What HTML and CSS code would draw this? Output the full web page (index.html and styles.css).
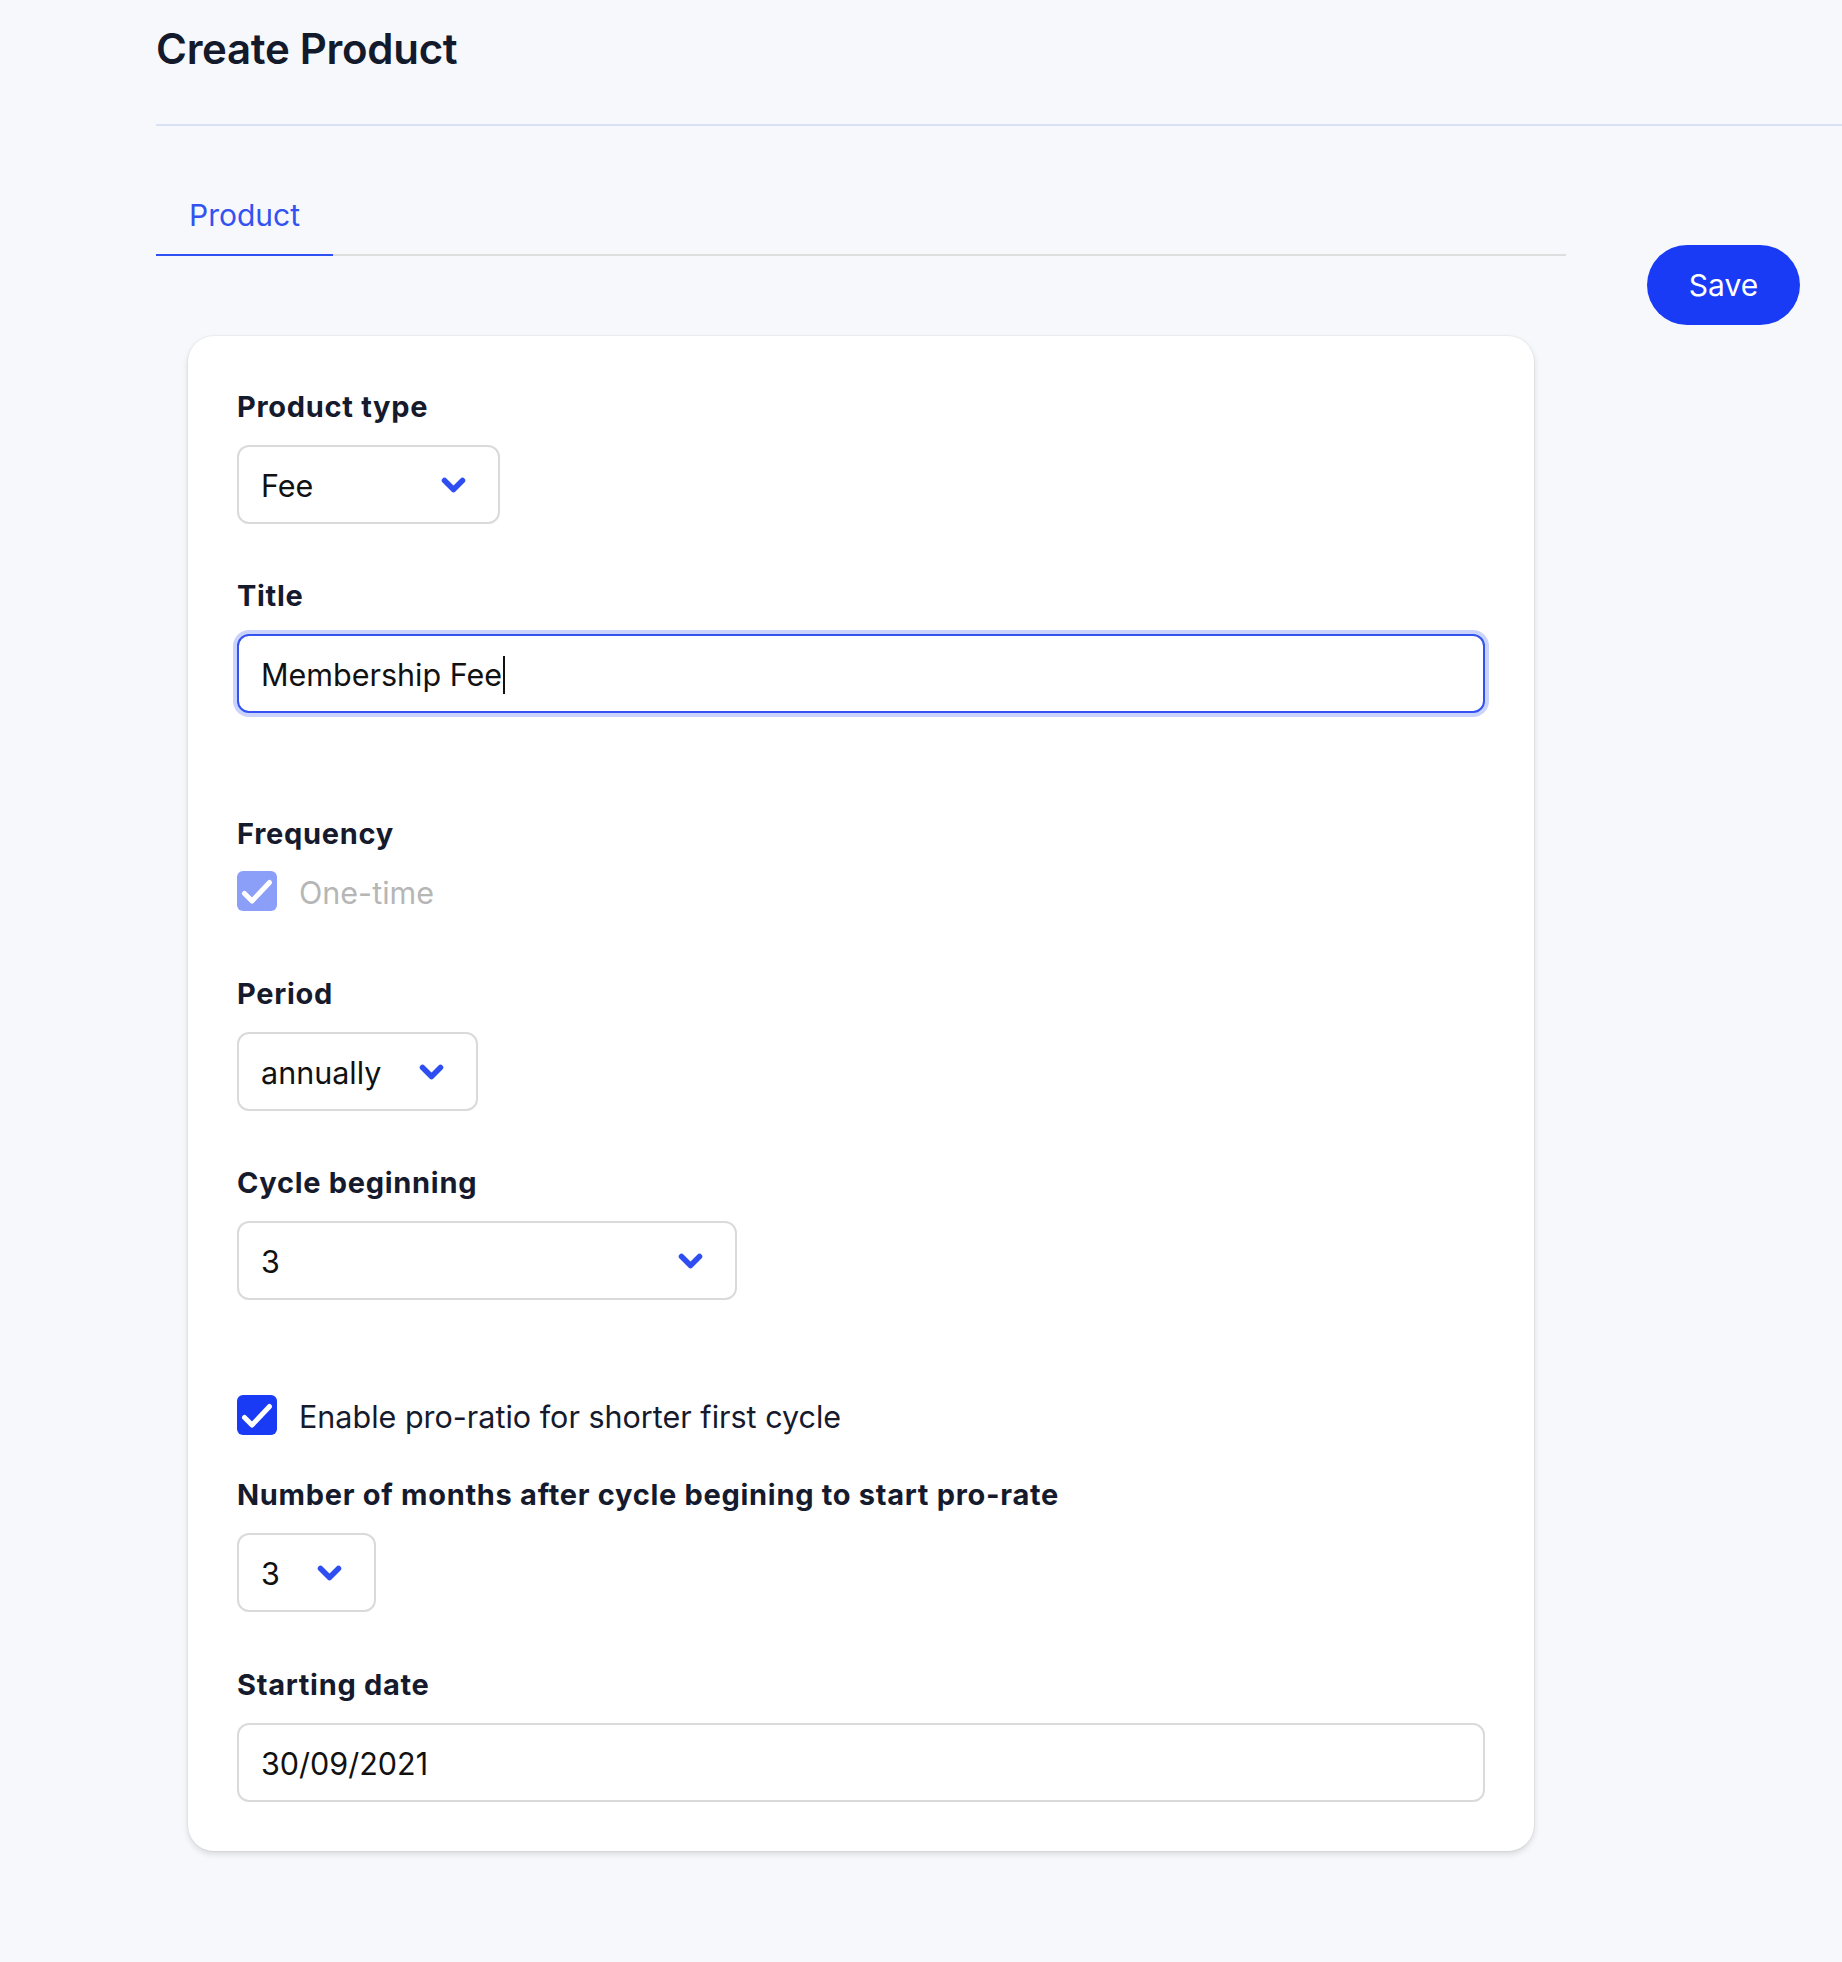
FILE: index.html
```html
<!DOCTYPE html>
<html lang="en">
<head>
<meta charset="utf-8">
<title>Create Product</title>
<link rel="stylesheet" href="styles.css">
</head>
<body>
<div class="page">
  <header class="header">
    <h1 class="title">Create Product</h1>
  </header>
  <div class="body">
    <main class="main">
      <nav class="tabs">
        <div class="tab tab-active">Product</div>
      </nav>
      <section class="card">
        <div class="field">
          <div class="label">Product type</div>
          <div class="select select-type">
            <span class="value">Fee</span>
            <svg class="chev" width="25" height="16" viewBox="0 0 25 16"><path d="M3.5 3.5 L12.5 12.5 L21.5 3.5"/></svg>
          </div>
        </div>

        <div class="field gap-54">
          <div class="label">Title</div>
          <div class="input input-focus">
            <span class="value">Membership Fee</span><span class="caret"></span>
          </div>
        </div>

        <div class="field gap-103">
          <div class="label label-tight">Frequency</div>
          <div class="check-row check-disabled">
            <span class="box"><svg width="40" height="40" viewBox="0 0 40 40"><path d="M7.5 22.5 L15 30 L32.5 11.5"/></svg></span>
            <span class="check-text">One-time</span>
          </div>
        </div>

        <div class="field gap-65">
          <div class="label">Period</div>
          <div class="select select-period">
            <span class="value">annually</span>
            <svg class="chev" width="25" height="16" viewBox="0 0 25 16"><path d="M3.5 3.5 L12.5 12.5 L21.5 3.5"/></svg>
          </div>
        </div>

        <div class="field gap-54">
          <div class="label">Cycle beginning</div>
          <div class="select select-cycle">
            <span class="value">3</span>
            <svg class="chev" width="25" height="16" viewBox="0 0 25 16"><path d="M3.5 3.5 L12.5 12.5 L21.5 3.5"/></svg>
          </div>
        </div>

        <div class="check-row check-on gap-95">
          <span class="box"><svg width="40" height="40" viewBox="0 0 40 40"><path d="M7.5 22.5 L15 30 L32.5 11.5"/></svg></span>
          <span class="check-text">Enable pro-ratio for shorter first cycle</span>
        </div>

        <div class="field gap-42">
          <div class="label">Number of months after cycle begining to start pro-rate</div>
          <div class="select select-months">
            <span class="value">3</span>
            <svg class="chev" width="25" height="16" viewBox="0 0 25 16"><path d="M3.5 3.5 L12.5 12.5 L21.5 3.5"/></svg>
          </div>
        </div>

        <div class="field gap-55">
          <div class="label">Starting date</div>
          <div class="input">
            <span class="value">30/09/2021</span>
          </div>
        </div>
      </section>
    </main>
    <aside class="side">
      <button class="save" type="button">Save</button>
    </aside>
  </div>
</div>
</body>
</html>
```

FILE: styles.css
```css
html, body {
  margin: 0;
  padding: 0;
}

body {
  background: #f7f8fc;
  font-family: Inter, "Noto Sans", "Liberation Sans", sans-serif;
  color: #161a2d;
  min-height: 1962px;
}

.page {
  padding-left: 156px;
}

.header {
  padding: 24px 0 50px;
  border-bottom: 2px solid #d8e2f6;
}

.title {
  margin: 0;
  font-size: 42px;
  line-height: 50px;
  font-weight: 600;
  color: #131a2b;
  letter-spacing: -0.3px;
}

.body {
  display: flex;
  align-items: flex-start;
  gap: 81px;
  padding-top: 69px;
  padding-right: 42px;
}

.main {
  flex: 1;
  min-width: 0;
}

.tabs {
  display: flex;
  border-bottom: 2px solid #dedede;
}

.tab {
  font-size: 30px;
  line-height: 40px;
  padding: 0 33px 19px;
  color: #3352f0;
  margin-bottom: -2px;
}

.tab-active {
  border-bottom: 2px solid #2f50f2;
}

.card {
  margin: 80px 32px 0;
  background: #ffffff;
  border-radius: 26px;
  padding: 53px 49px 49px;
  box-shadow: 0 0 0 1px rgba(0, 0, 0, 0.035), 0 3px 6px rgba(0, 0, 0, 0.13);
}

.label {
  font-size: 29px;
  line-height: 35px;
  font-weight: 700;
  letter-spacing: 0.7px;
  color: #161a2d;
  margin-bottom: 21px;
}

.label-tight {
  margin-bottom: 20px;
}

.gap-42 { margin-top: 42px; }
.gap-54 { margin-top: 54px; }
.gap-55 { margin-top: 55px; }
.gap-65 { margin-top: 65px; }
.gap-95 { margin-top: 95px; }
.gap-103 { margin-top: 103px; }

.select,
.input {
  box-sizing: border-box;
  height: 79px;
  border: 2px solid #dadada;
  border-radius: 12px;
  background: #ffffff;
  display: flex;
  align-items: center;
  padding: 2px 32px 0 22px;
  font-size: 30.5px;
  color: #111111;
}

.select {
  justify-content: space-between;
}

.select-type { width: 263px; }
.select-period { width: 241px; }
.select-cycle { width: 500px; }
.select-months { width: 139px; }

.input {
  width: 100%;
}

.input-focus {
  border-color: #3352f0;
  box-shadow: 0 0 0 4px #cad3fb;
}

.value {
  line-height: 40px;
}

.caret {
  display: inline-block;
  width: 2px;
  height: 38px;
  background: #111111;
  margin-left: 1px;
}

.chev {
  display: block;
  flex: none;
  margin-top: -2px;
}

.chev path {
  fill: none;
  stroke: #2f4ef2;
  stroke-width: 5.5;
  stroke-linecap: round;
  stroke-linejoin: round;
}

.check-row {
  display: flex;
  align-items: center;
  gap: 22px;
  height: 40px;
}

.box {
  width: 40px;
  height: 40px;
  border-radius: 6px;
  display: block;
  flex: none;
}

.box svg {
  display: block;
}

.box path {
  fill: none;
  stroke: #ffffff;
  stroke-width: 5;
  stroke-linecap: round;
  stroke-linejoin: round;
}

.check-disabled .box {
  background: #8c9ff8;
}

.check-disabled .check-text {
  color: #b6b6b6;
}

.check-on .box {
  background: #1a3bf5;
}

.check-text {
  font-size: 30.5px;
  line-height: 40px;
  padding-top: 3px;
  color: #161a2d;
}

.side {
  flex: none;
  width: 153px;
  padding-top: 50px;
}

.save {
  display: block;
  width: 153px;
  height: 80px;
  border: none;
  border-radius: 40px;
  background: #1a3bf5;
  color: #ffffff;
  font-family: Inter, "Noto Sans", "Liberation Sans", sans-serif;
  font-size: 30px;
  padding: 0;
}
```
